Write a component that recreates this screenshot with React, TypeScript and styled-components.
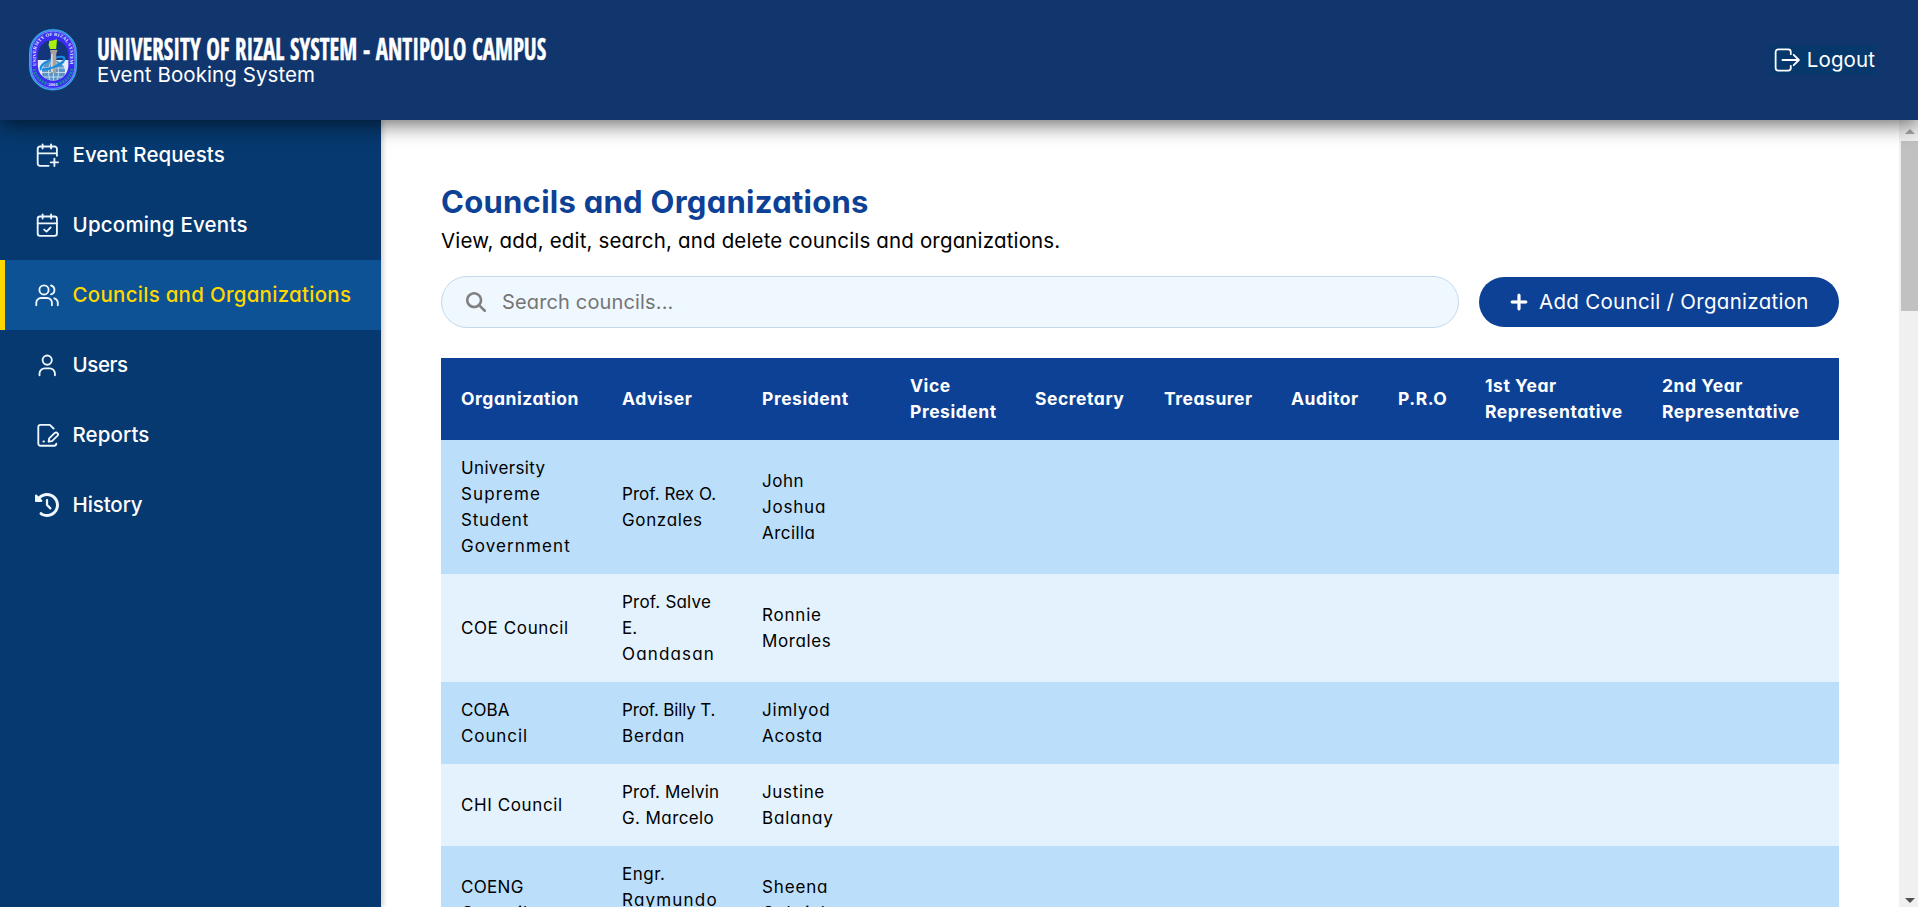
import React from 'react';
import styled, { createGlobalStyle, css } from 'styled-components';
import { FaMagnifyingGlass, FaPlus, FaClockRotateLeft } from 'react-icons/fa6';

const GlobalStyle = createGlobalStyle`
  * { box-sizing: border-box; }
  body {
    margin: 0;
    overflow: hidden;
    background: #fff;
    color: #000;
    font-family: Inter, "Open Sans", "Liberation Sans", sans-serif;
    font-feature-settings: "cv11";
  }
`;

const Page = styled.div`
  display: flex;
  flex-direction: column;
  height: 907px;
  overflow: hidden;
`;

const Header = styled.header`
  position: relative;
  z-index: 2;
  flex: none;
  display: flex;
  align-items: center;
  justify-content: space-between;
  height: 120px;
  padding: 0 43px 0 29px;
  background: #11356d;
  color: #fff;
  box-shadow: 0 4px 20px rgba(0, 0, 0, 0.6);
`;

const Brand = styled.div`
  display: flex;
  align-items: center;
  gap: 20px;
`;

const BrandText = styled.div`
  display: flex;
  flex-direction: column;
  width: 480px;
  padding-top: 2px;
`;

const CampusName = styled.span`
  height: 28px;
  line-height: 28px;
  font-family: "Open Sans Condensed", "Open Sans", sans-serif;
  font-size: 30.5px;
  font-weight: 700;
  white-space: nowrap;
  -webkit-text-stroke: 0.5px #fff;
  transform: scaleX(0.75);
  transform-origin: left center;
`;

const SystemName = styled.span`
  height: 26px;
  line-height: 26px;
  font-size: 20.5px;
  letter-spacing: 0.08px;
`;

const LogoutButton = styled.button`
  display: flex;
  align-items: center;
  gap: 7px;
  height: 30px;
  padding: 0 0 0 3px;
  border: 0;
  background: #06386c;
  color: #fff;
  font: inherit;
  font-size: 20.5px;
  line-height: 24px;
  letter-spacing: 0.1px;
`;

const Body = styled.div`
  flex: 1;
  display: flex;
  min-height: 0;
`;

const Sidebar = styled.nav`
  position: relative;
  z-index: 1;
  flex: none;
  display: flex;
  flex-direction: column;
  width: 381px;
  background: #06396f;
  box-shadow: 2px 0 5px rgba(0, 0, 0, 0.2);
`;

const NavItem = styled.a<{ $active?: boolean; $tracking: number }>`
  display: flex;
  align-items: center;
  gap: 12.5px;
  height: 70px;
  padding-left: 30px;
  border-left: 5px solid transparent;
  color: #fff;
  font-size: 20.5px;
  line-height: 24px;
  font-weight: 540;
  letter-spacing: ${(p) => p.$tracking}px;
  white-space: nowrap;
  ${(p) =>
    p.$active &&
    css`
      border-left-color: #ffd700;
      background: #0c5294;
      color: #ffd700;
    `}
`;

const NavIcon = styled.span`
  display: flex;
  flex: none;
  width: 25px;
  height: 24px;
  color: #f0f8ff;
`;

const Main = styled.main`
  flex: 1;
  min-width: 0;
  height: 787px;
  padding: 60px 60px 0;
  overflow: hidden;
`;

const Title = styled.h1`
  margin: 0;
  height: 44px;
  color: #0d4195;
  font-size: 31px;
  font-weight: 750;
  line-height: 44px;
  letter-spacing: 0.27px;
`;

const Subtitle = styled.p`
  margin: 0 0 20px;
  height: 32px;
  font-size: 20.5px;
  line-height: 33px;
  letter-spacing: 0.16px;
`;

const Tools = styled.div`
  display: flex;
  align-items: center;
  gap: 20px;
  height: 52px;
  margin-bottom: 30px;
`;

const SearchBox = styled.label`
  flex: 1;
  display: flex;
  align-items: center;
  gap: 16px;
  height: 52px;
  padding-left: 24px;
  border: 1px solid #c6d9eb;
  border-radius: 26px;
  background: #eff7ff;
  color: #808080;
  font-size: 20px;
`;

const SearchInput = styled.input`
  flex: 1;
  height: 30px;
  padding: 0;
  border: 0;
  outline: 0;
  background: transparent;
  font: inherit;
  letter-spacing: 0.15px;
  &::placeholder {
    color: #757575;
  }
`;

const AddButton = styled.button`
  display: flex;
  align-items: center;
  gap: 10px;
  width: 360px;
  height: 50px;
  padding: 0 0 0 30px;
  border: 0;
  border-radius: 25px;
  background: #0d4195;
  color: #fff;
  font: inherit;
  font-size: 20.5px;
  line-height: 24px;
  letter-spacing: 0.3px;
  white-space: nowrap;
`;

const PlusIcon = styled(FaPlus)`
  stroke: currentColor;
  stroke-width: 16px;
`;

const Table = styled.table`
  width: 1398px;
  table-layout: fixed;
  border-collapse: collapse;
  font-size: 17px;
  line-height: 26px;
  text-align: left;
`;

const Column = styled.col<{ $width: number }>`
  width: ${(p) => p.$width}px;
`;

const HeadCell = styled.th`
  padding: 15px 0 15px 20px;
  background: #0d4195;
  color: #fff;
  font-size: 17.5px;
  font-weight: 750;
  letter-spacing: 0.55px;
  white-space: pre-line;
`;

const Row = styled.tr`
  background: #e3f2fd;
  &:nth-child(odd) {
    background: #bbdefb;
  }
`;

const Cell = styled.td`
  padding: 15px 0 15px 20px;
  white-space: pre;
`;

const Line = styled.span<{ $tracking: number }>`
  display: block;
  height: 26px;
  letter-spacing: ${(p) => p.$tracking}px;
`;

const Scrollbar = styled.div`
  flex: none;
  display: flex;
  flex-direction: column;
  align-items: center;
  width: 19px;
  padding: 9px 0 4px 2px;
  background: #f0f0f0;
`;

const ScrollArrow = styled.span<{ $down?: boolean }>`
  width: 0;
  height: 0;
  border: 5px solid transparent;
  ${(p) =>
    p.$down
      ? css`
          margin-top: auto;
          border-top-color: #505050;
          border-bottom-width: 0;
        `
      : css`
          margin-bottom: 7px;
          border-bottom-color: #a3a3a3;
          border-top-width: 0;
        `}
`;

const ScrollThumb = styled.span`
  width: 17px;
  height: 170px;
  background: #c1c1c1;
`;

function Stroke({ children, size = 24, width = 1.85 }: { children: React.ReactNode; size?: number; width?: number }) {
  return (
    <svg width={size} height={size} viewBox="0 0 24 24" fill="none" stroke="currentColor" strokeWidth={width} strokeLinecap="round" strokeLinejoin="round">
      {children}
    </svg>
  );
}

const CalendarPlus = () => (
  <Stroke>
    <path d="M21.9 12.8V5.8a2.3 2.3 0 0 0-2.3-2.3H5a2.3 2.3 0 0 0-2.3 2.3v14.6A2.3 2.3 0 0 0 5 22.8h8.6M2.7 10.3h19.2M7.6 1.3v4.2M16.1 1.3v4.2M19.4 15.6v7.4M15.7 19.3h7.4" />
  </Stroke>
);

const CalendarCheck = () => (
  <Stroke>
    <rect x="2.7" y="3.5" width="19.2" height="19.3" rx="2.3" />
    <path d="M2.7 10.3h19.2M7.6 1.3v4.2M16.1 1.3v4.2M9.2 16.6l2.3 2 4.1-4.1" />
  </Stroke>
);

const People = () => (
  <Stroke>
    <circle cx="9" cy="6.9" r="4.6" />
    <path d="M1.3 22.3v-2.5a4.8 4.8 0 0 1 4.8-4.8h6a4.8 4.8 0 0 1 4.8 4.8v2.5M16 2.5a4.6 4.6 0 0 1 0 8.9M19.3 15.3a4.8 4.8 0 0 1 3.5 4.5v2.5" />
  </Stroke>
);

const Person = () => (
  <Stroke>
    <circle cx="12.2" cy="7.1" r="4.6" />
    <path d="M4.500 22.3v-1.8a5.2 5.2 0 0 1 5.2-5.2h5a5.2 5.2 0 0 1 5.2 5.2v1.8" />
  </Stroke>
);

const Report = () => (
  <Stroke>
    <path d="M18.6 5.5 14.8 1.9H5.5a2.2 2.2 0 0 0-2.2 2.2v16.4a2.2 2.2 0 0 0 2.2 2.2h13.6a2.2 2.2 0 0 0 2.2-2M8.4 18.5h.6" />
    <path d="m13.6 18.7.6-3.4 5.6-5.4a2 2 0 0 1 2.8 2.8L17 18.1z" />
  </Stroke>
);

const LogoutIcon = () => (
  <Stroke size={26} width={1.65}>
    <path d="M15.5 6.6V4.6a2.4 2.4 0 0 0-2.4-2.4H3.9a2.4 2.4 0 0 0-2.4 2.4v14.8a2.4 2.4 0 0 0 2.4 2.4h9.2a2.4 2.4 0 0 0 2.4-2.4v-2M7.8 12h15.2M18.2 7.2 23 12l-4.8 4.8" />
  </Stroke>
);

const Seal = () => (
  <svg width="48" height="62" viewBox="0 0 48 62">
    <defs>
      <clipPath id="field">
        <rect x="8.8" y="11" width="30.6" height="40.5" rx="15.3" />
      </clipPath>
      <path id="ring" d="M6.8 37V24a17.2 17.2 0 0 1 34.4 0V37" />
    </defs>
    <rect x="0.8" y="0.8" width="46.4" height="60" rx="23.2" fill="#3a2cf0" stroke="#3aa4e6" strokeWidth="1.6" />
    <rect x="2.2" y="2.2" width="43.6" height="57.2" rx="21.8" fill="none" stroke="#9cc8ff" strokeWidth="0.6" />
    <g clipPath="url(#field)">
      <rect x="8" y="10" width="32" height="21" fill="#12357c" />
      <rect x="8" y="31" width="32" height="21" fill="#e4ebf4" />
      <circle cx="24.5" cy="43" r="11.5" fill="#5c94c6" />
      <g fill="none" stroke="#d4e8f6" strokeWidth="0.8">
        <ellipse cx="24.5" cy="43" rx="5" ry="11.5" />
        <path d="M24.5 31v22M13 39h23M13 43.5h23M14 48h21" />
      </g>
    </g>
    <path d="M5 40c1 7 6 13 14 15M43 40c-1 7-6 13-14 15" fill="none" stroke="#168b9c" strokeWidth="3" strokeDasharray="2 1" />
    <path d="M12 41c-3-4 8-11 17-13 6-1 8 1 5 5-3 3-9 6-15 7" fill="none" stroke="#168be0" strokeWidth="2.2" />
    <path d="M21 21h7.500l-1.300 4v19h-5.400V25z" fill="#a8a39c" />
    <path d="M22 25h1.800v18h-1.800z" fill="#d9d6d0" />
    <path d="M20.500 11.500c3 1 5-1.500 7.500-1l-.8 9.500h-6.200l-1.500-4z" fill="#a9f010" />
    <path d="M13 40.500c7 0 15-3 21-8" fill="none" stroke="#168be0" strokeWidth="2" />
    <text fill="#e6ecff" fontSize="4.600" fontWeight="700" fontFamily="Liberation Serif, serif">
      <textPath href="#ring" textLength="78" lengthAdjust="spacingAndGlyphs">UNIVERSITY OF RIZAL SYSTEM</textPath>
    </text>
    <text x="24" y="57" textAnchor="middle" fill="#e6ecff" fontSize="4.800" fontWeight="700" fontFamily="Liberation Serif, serif">2001</text>
  </svg>
);

const NAV = [
  { label: 'Event Requests', icon: <CalendarPlus />, tracking: 0.05 },
  { label: 'Upcoming Events', icon: <CalendarCheck />, tracking: 0.22 },
  { label: 'Councils and Organizations', icon: <People />, tracking: 0.27, active: true },
  { label: 'Users', icon: <Person />, tracking: -0.4 },
  { label: 'Reports', icon: <Report />, tracking: 0.1 },
  { label: 'History', icon: <FaClockRotateLeft size={24} />, tracking: -0.1 },
];

const COLUMNS: [string, number][] = [
  ['Organization', 161],
  ['Adviser', 140],
  ['President', 148],
  ['Vice\nPresident', 125],
  ['Secretary', 129],
  ['Treasurer', 127],
  ['Auditor', 107],
  ['P.R.O', 87],
  ['1st Year\nRepresentative', 177],
  ['2nd Year\nRepresentative', 197],
];

type TextLine = [string, number];

const COUNCILS: TextLine[][][] = [
  [
    [['University', 0.35], ['Supreme', 1.1], ['Student', 0.8], ['Government', 1.1]],
    [['Prof. Rex O.', 0.05], ['Gonzales', 0.65]],
    [['John', 0.5], ['Joshua', 0.8], ['Arcilla', 0.45]],
  ],
  [
    [['COE Council', 0.6]],
    [['Prof. Salve', 0.2], ['E.', 0], ['Oandasan', 1.15]],
    [['Ronnie', 0.8], ['Morales', 0.6]],
  ],
  [
    [['COBA', 0.1], ['Council', 0.9]],
    [['Prof. Billy T.', -0.15], ['Berdan', 0.85]],
    [['Jimlyod', 0.8], ['Acosta', 0.75]],
  ],
  [
    [['CHI Council', 0.6]],
    [['Prof. Melvin', 0.15], ['G. Marcelo', 0.4]],
    [['Justine', 0.65], ['Balanay', 0.8]],
  ],
  [
    [['COENG', 0.3], ['Council', 0.9]],
    [['Engr.', 0.5], ['Raymundo', 1.2], ['\u00a0', 0]],
    [['Sheena', 0.85], ['Gabriel', 0.75]],
  ],
];

export default function App() {
  return (
    <Page>
      <GlobalStyle />
      <Header>
        <Brand>
          <Seal />
          <BrandText>
            <CampusName>UNIVERSITY OF RIZAL SYSTEM - ANTIPOLO CAMPUS</CampusName>
            <SystemName>Event Booking System</SystemName>
          </BrandText>
        </Brand>
        <LogoutButton>
          <LogoutIcon />
          Logout
        </LogoutButton>
      </Header>
      <Body>
        <Sidebar>
          {NAV.map((item) => (
            <NavItem key={item.label} $active={item.active} $tracking={item.tracking}>
              <NavIcon>{item.icon}</NavIcon>
              {item.label}
            </NavItem>
          ))}
        </Sidebar>
        <Main>
          <Title>Councils and Organizations</Title>
          <Subtitle>View, add, edit, search, and delete councils and organizations.</Subtitle>
          <Tools>
            <SearchBox>
              <FaMagnifyingGlass size={20} />
              <SearchInput placeholder="Search councils..." />
            </SearchBox>
            <AddButton>
              <PlusIcon size={20} />
              Add Council / Organization
            </AddButton>
          </Tools>
          <Table>
            <colgroup>
              {COLUMNS.map(([name, width]) => (
                <Column key={name} $width={width} />
              ))}
            </colgroup>
            <thead>
              <tr>
                {COLUMNS.map(([name]) => (
                  <HeadCell key={name}>{name}</HeadCell>
                ))}
              </tr>
            </thead>
            <tbody>
              {COUNCILS.map((cells, r) => (
                <Row key={r}>
                  {COLUMNS.map(([name], c) => (
                    <Cell key={name}>
                      {(cells[c] || []).map(([text, tracking]) => (
                        <Line key={text} $tracking={tracking}>
                          {text}
                        </Line>
                      ))}
                    </Cell>
                  ))}
                </Row>
              ))}
            </tbody>
          </Table>
        </Main>
        <Scrollbar>
          <ScrollArrow />
          <ScrollThumb />
          <ScrollArrow $down />
        </Scrollbar>
      </Body>
    </Page>
  );
}
